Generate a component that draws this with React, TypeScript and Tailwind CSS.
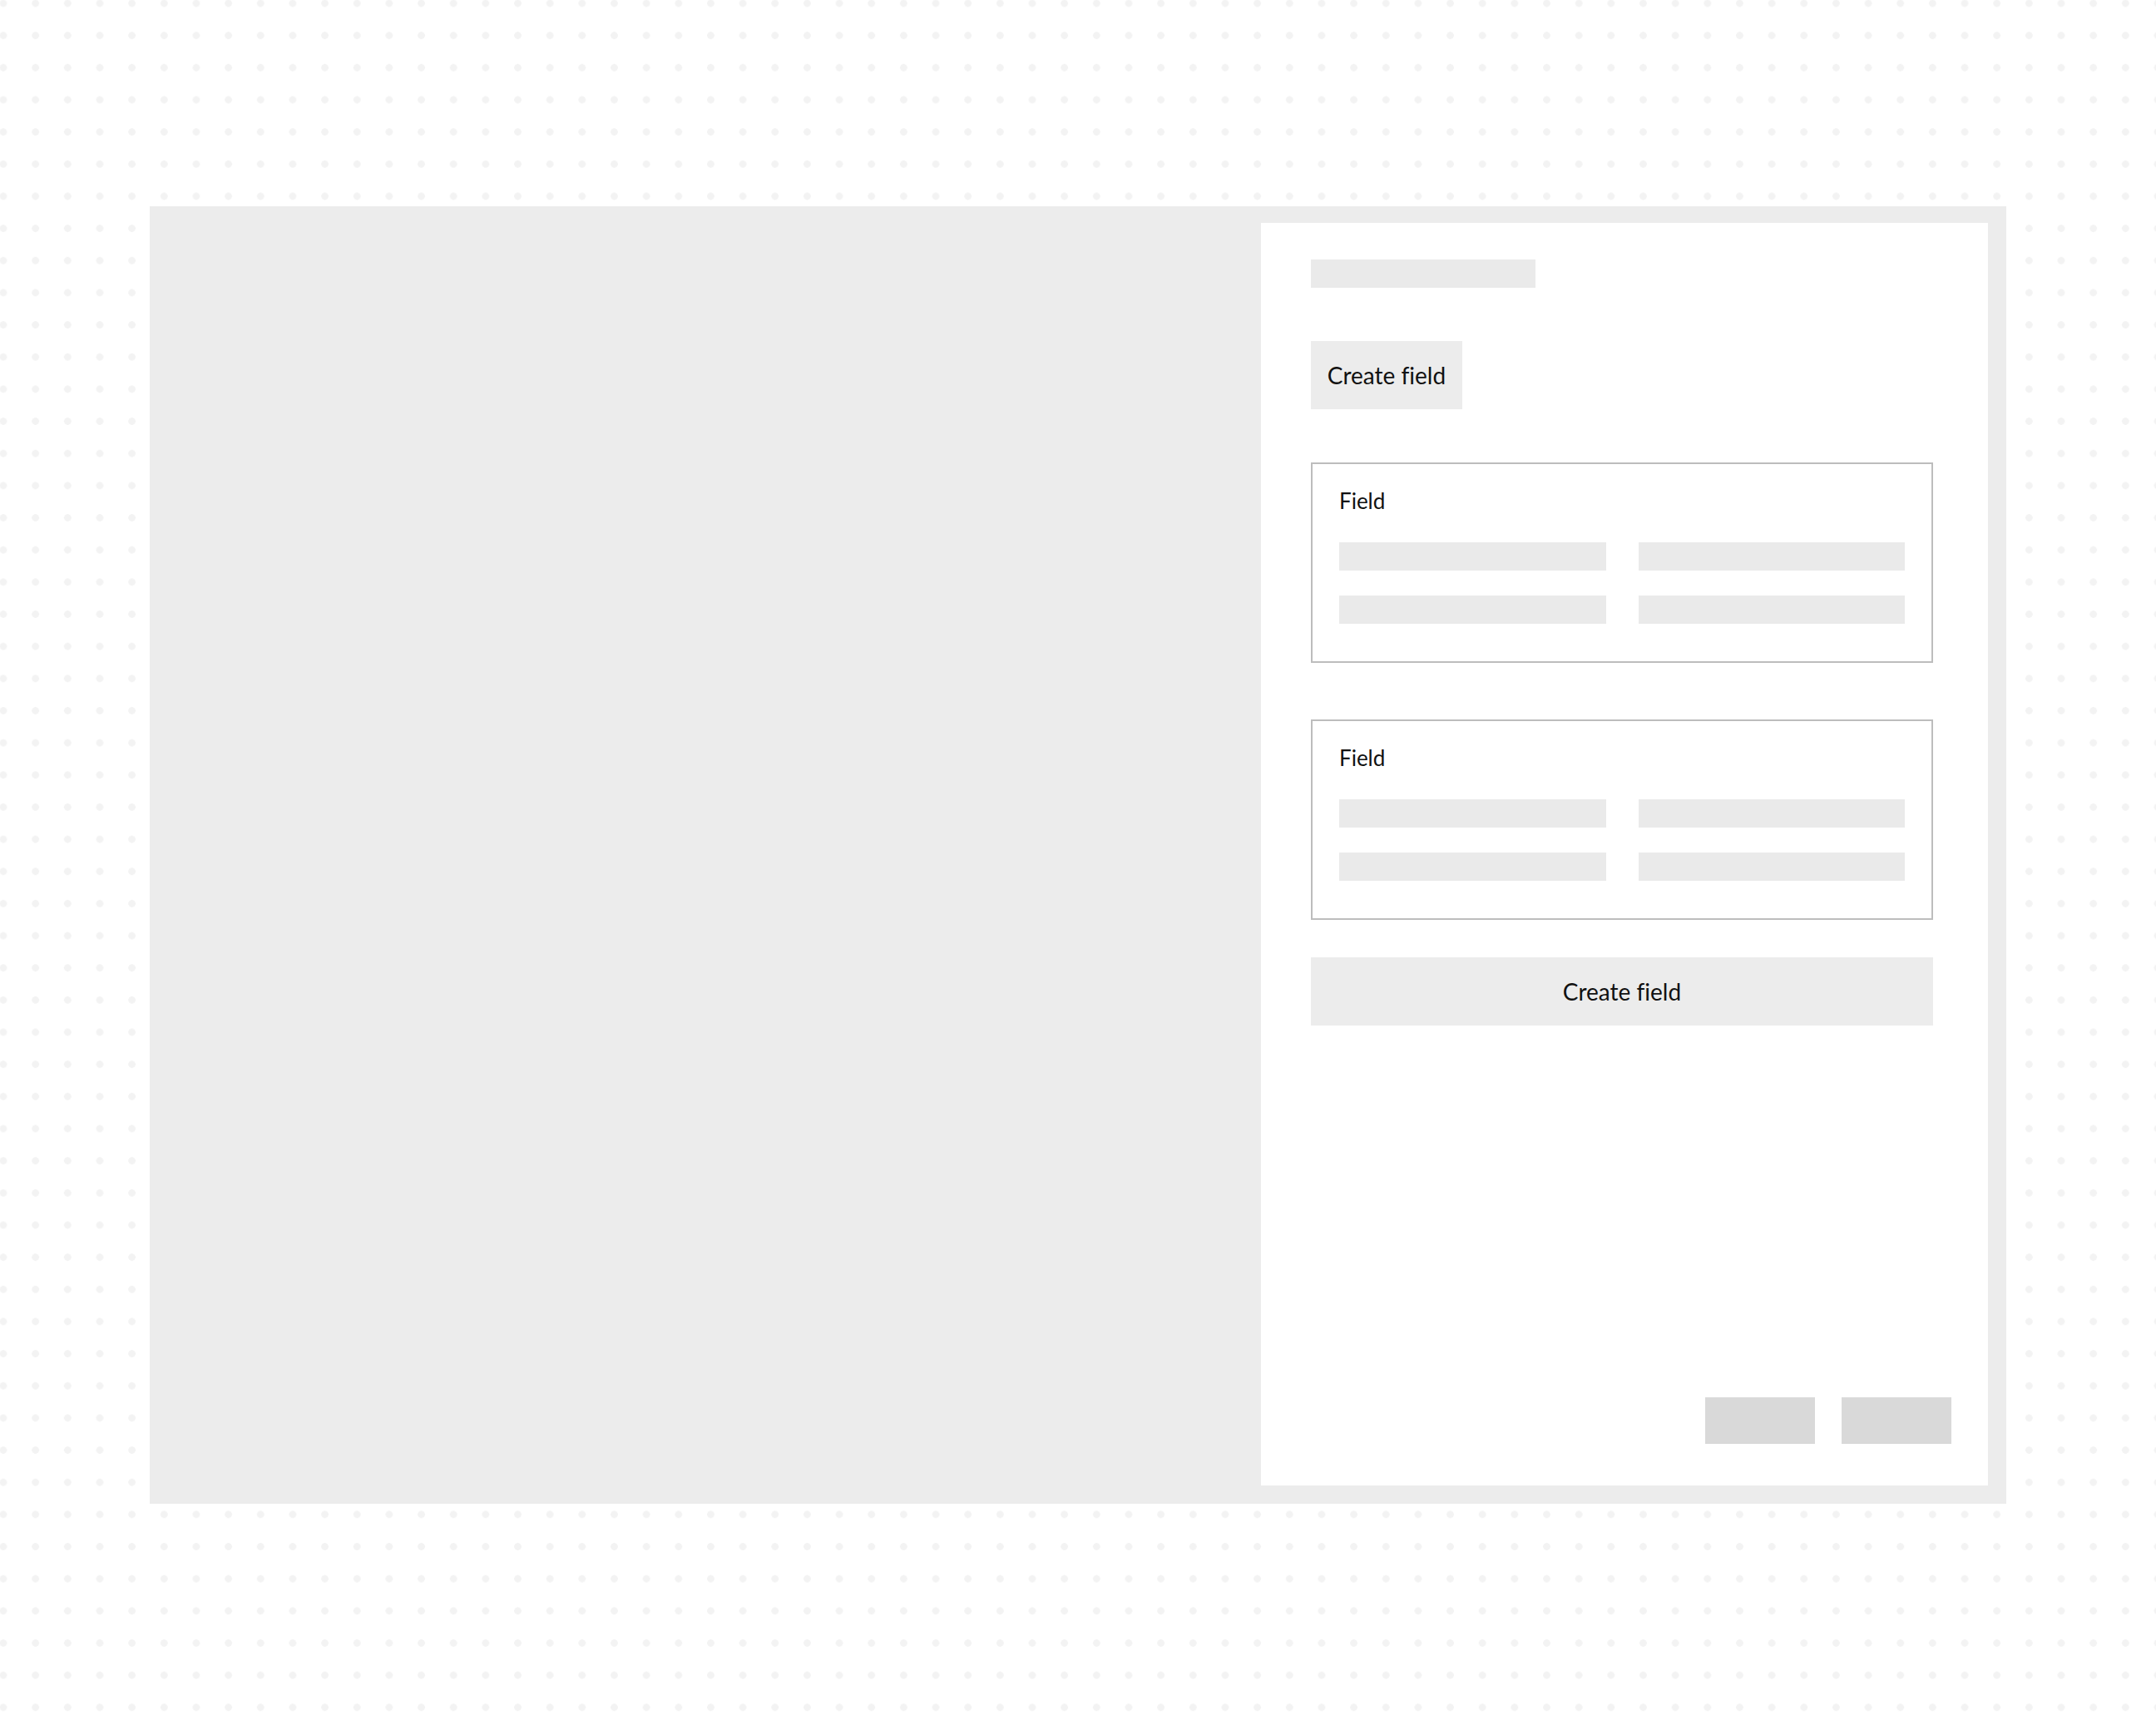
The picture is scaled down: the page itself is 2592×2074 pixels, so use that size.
export default function App() {
  return (
    <div className="min-h-[2074px] w-full bg-white pt-[248px] [background-image:radial-gradient(circle,#f3f3f3_4px,transparent_4.6px)] [background-size:38.667px_38.667px] [background-position:-15.33px_-15.33px] [font-family:Lato,sans-serif] [font-variant-ligatures:none] text-[#111]">
      <div className="ml-[180px] flex h-[1560px] w-[2232px] bg-[#ececec] pt-[20px] pr-[22px] pb-[22px]">
        <div className="flex-1" />
        <div className="flex w-[874px] flex-col bg-white pt-[44px] pr-[44px] pb-[50px] pl-[60px]">
          <div className="h-[34px] w-[270px] bg-[#eaeaea]" />
          <button className="mt-[64px] flex h-[82px] w-[182px] items-center justify-center bg-[#ececec] text-[28px]">
            Create field
          </button>
          <FieldCard className="mt-[64px]" />
          <FieldCard className="mt-[68px]" />
          <button className="mt-[45px] flex h-[82px] w-[748px] items-center justify-center bg-[#ececec] text-[28px]">
            Create field
          </button>
          <div className="mt-auto flex justify-end gap-[32px]">
            <div className="h-[56px] w-[132px] bg-[#d9d9d9]" />
            <div className="h-[56px] w-[132px] bg-[#d9d9d9]" />
          </div>
        </div>
      </div>
    </div>
  );
}

function FieldCard({ className }: { className?: string }) {
  return (
    <div className={`w-[748px] border-2 border-[#bdbdbd] px-[32px] pt-[28px] pb-[45px] ${className ?? ''}`}>
      <div className="text-[26px] leading-[32px]">Field</div>
      <div className="mt-[34px] grid grid-cols-2 gap-x-[39px] gap-y-[30px]">
        <div className="h-[34px] bg-[#eaeaea]" />
        <div className="h-[34px] bg-[#eaeaea]" />
        <div className="h-[34px] bg-[#eaeaea]" />
        <div className="h-[34px] bg-[#eaeaea]" />
      </div>
    </div>
  );
}
